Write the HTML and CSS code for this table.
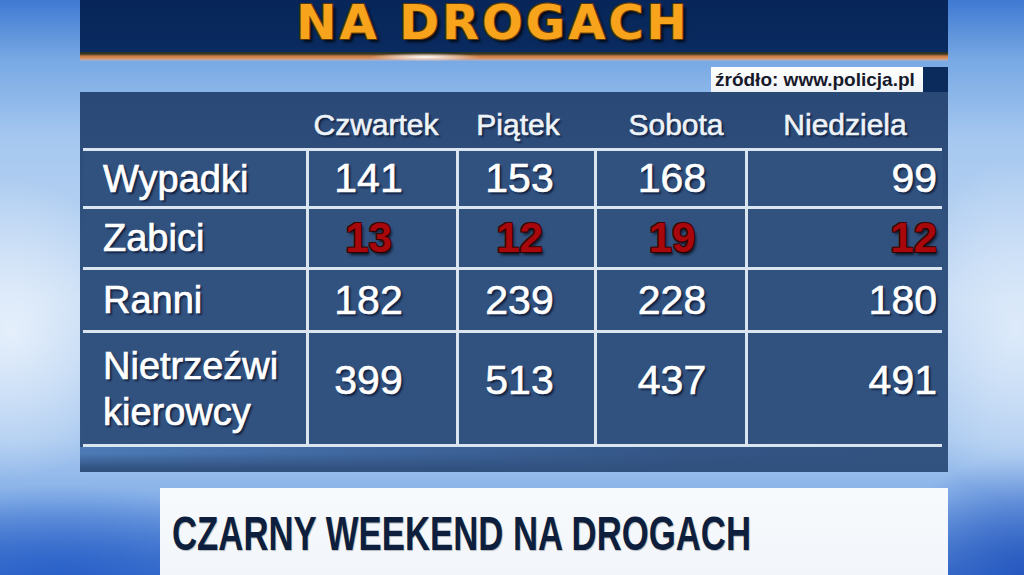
FILE: index.html
```html
<!DOCTYPE html>
<html lang="pl">
<head>
<meta charset="utf-8">
<title>Na drogach</title>
<link rel="stylesheet" href="styles.css">
</head>
<body>
<div class="screen">
  <header class="titlebar"><h1 class="title">NA DROGACH</h1></header>
  <div class="stripe"></div>
  <div class="source-row">
    <span class="source">źródło: www.policja.pl</span>
    <span class="source-tab"></span>
  </div>
  <section class="panel">
    <div class="head">
      <div></div>
      <div class="h c1">Czwartek</div>
      <div class="h c2">Piątek</div>
      <div class="h c3">Sobota</div>
      <div class="h c4">Niedziela</div>
    </div>
    <div class="grid">
      <div class="label">Wypadki</div>
      <div class="num c1">141</div>
      <div class="num c2">153</div>
      <div class="num c3">168</div>
      <div class="num c4">99</div>

      <div class="label">Zabici</div>
      <div class="num c1 red">13</div>
      <div class="num c2 red">12</div>
      <div class="num c3 red">19</div>
      <div class="num c4 red">12</div>

      <div class="label">Ranni</div>
      <div class="num c1">182</div>
      <div class="num c2">239</div>
      <div class="num c3">228</div>
      <div class="num c4">180</div>

      <div class="label">Nietrzeźwi<br>kierowcy</div>
      <div class="num c1 tall">399</div>
      <div class="num c2 tall">513</div>
      <div class="num c3 tall">437</div>
      <div class="num c4 tall">491</div>
    </div>
    <div class="panel-foot"></div>
  </section>
  <div class="banner"><span class="banner-text">CZARNY WEEKEND NA DROGACH</span></div>
</div>
</body>
</html>
```

FILE: styles.css
```css
html, body {
  margin: 0;
  padding: 0;
}
body {
  width: 1024px;
  height: 575px;
  overflow: hidden;
  font-family: "Liberation Sans", Arial, sans-serif;
  background:
    radial-gradient(ellipse 130px 150px at 10px 330px, rgba(236,244,253,0.85), rgba(236,244,253,0) 100%),
    radial-gradient(ellipse 110px 170px at 1015px 330px, rgba(228,239,252,0.8), rgba(228,239,252,0) 100%),
    radial-gradient(ellipse 260px 90px at 60px 575px, rgba(40,95,200,0.9), rgba(40,95,200,0) 100%),
    radial-gradient(ellipse 140px 120px at 1024px 575px, rgba(35,85,190,0.9), rgba(35,85,190,0) 100%),
    linear-gradient(180deg, #3f7ad2 0px, #78a9e4 60px, #a6c8f0 140px, #c3d9f3 300px, #a8c8ef 440px, #86b0e8 500px, #3f74cc 575px);
}
.screen {
  width: 868px;
  margin-left: 80px;
}
.titlebar {
  height: 52px;
  overflow: hidden;
  background: linear-gradient(180deg, #072558 0%, #0a2b60 100%);
  text-align: center;
  padding-right: 42px;
}
.title {
  margin: 0;
  font-family: "DejaVu Sans", sans-serif;
  font-weight: bold;
  font-size: 48px;
  line-height: 44px;
  letter-spacing: 3px;
  color: #f7a41c;
  text-shadow: 1px 1px 0 #5b380c, -1px -1px 0 #5b380c, 1px -1px 0 #5b380c, -1px 1px 0 #5b380c, 3px 3px 3px rgba(0,0,0,0.8);
}
.stripe {
  height: 9px;
  background:
    radial-gradient(ellipse 55px 4px at 345px 5px, rgba(255,255,255,1), rgba(255,255,255,0) 100%),
    linear-gradient(180deg, #253022 0px, #3a3a26 2px, #7d5a36 3px, #c8763c 4px, #d8905a 6px, #b7a9b6 8px, #8cb0e0 9px);
}
.source-row {
  display: flex;
  justify-content: flex-end;
  padding-top: 6px;
  height: 25px;
}
.source {
  height: 25px;
  width: 212px;
  box-sizing: border-box;
  padding-left: 4px;
  background: linear-gradient(180deg, #ffffff 0%, #eef2f6 100%);
  font-weight: bold;
  font-size: 19px;
  line-height: 26px;
  color: #17192a;
  white-space: nowrap;
}
.source-tab {
  width: 25px;
  height: 25px;
  background: #0c2b5d;
}
.panel {
  height: 380px;
  box-sizing: border-box;
  padding: 0 6px 0 3px;
  background: linear-gradient(180deg, #2b4977 0%, #31517f 40%, #32527f 100%);
  display: flex;
  flex-direction: column;
}
.head {
  height: 56px;
  display: grid;
  grid-template-columns: 223px 147px 135px 148px 194px;
  column-gap: 3px;
  align-items: end;
  padding-bottom: 6px;
  box-sizing: border-box;
}
.h {
  font-size: 30px;
  line-height: 34px;
  color: #eef3f8;
  -webkit-text-stroke: 0.6px #eef3f8;
  text-shadow: 2px 2px 2px rgba(5,15,40,0.7);
  text-align: center;
  white-space: nowrap;
}
.h.c1 { padding-right: 13px; }
.h.c2 { padding-right: 17px; }
.h.c3 { padding-left: 10px; }
.h.c4 { padding-left: 0; }
.grid {
  display: grid;
  grid-template-columns: 223px 147px 135px 148px 194px;
  grid-template-rows: 55px 58px 60px 111px;
  gap: 3px;
  background: #dbe5f0;
  border-top: 3px solid #dbe5f0;
  border-bottom: 3px solid #dbe5f0;
}
.grid > div {
  background: #31517f;
  display: flex;
  align-items: center;
  color: #ffffff;
  white-space: nowrap;
}
.label {
  padding-left: 20px;
  font-size: 38px;
  line-height: 46px;
  -webkit-text-stroke: 0.7px #ffffff;
  text-shadow: 2px 2px 2px rgba(5,15,40,0.75);
}
.num {
  font-size: 41px;
  -webkit-text-stroke: 0.6px #ffffff;
  text-shadow: 2px 2px 2px rgba(5,15,40,0.75);
}
.num.c1 { justify-content: center; padding-right: 28px; }
.num.c2 { justify-content: center; padding-right: 14px; }
.num.c3 { justify-content: center; padding-left: 2px; }
.num.c4 { justify-content: flex-end; padding-right: 5px; }
.num.tall { padding-bottom: 16px; }
.num.red {
  color: #a8080b;
  font-weight: bold;
  font-size: 42px;
  -webkit-text-stroke: 0;
  text-shadow: 1px 1px 0 #2a0000, -1px -1px 0 #3a0505, 1px -1px 0 #3a0505, -1px 1px 0 #3a0505, 2px 3px 3px rgba(0,0,0,0.7);
}
.panel-foot {
  flex: 1;
  margin: 0 -6px 0 -3px;
  background:
    linear-gradient(180deg, rgba(49,81,127,0) 0px, rgba(49,81,127,0) 6px, rgba(49,81,127,1) 22px),
    linear-gradient(90deg, rgba(95,150,220,0.6) 0%, rgba(80,130,200,0.4) 35%, rgba(60,100,170,0.15) 70%, rgba(50,80,130,0) 100%);
}
.banner {
  margin-top: 16px;
  margin-left: 80px;
  height: 87px;
  box-sizing: border-box;
  padding: 4px 0 0 12px;
  background: linear-gradient(180deg, #f7fafd 0%, #f2f6fa 100%);
  overflow: hidden;
}
.banner-text {
  display: inline-block;
  font-weight: bold;
  font-size: 49px;
  line-height: 83px;
  color: #0e1f3d;
  white-space: nowrap;
  transform: scaleX(0.709);
  transform-origin: 0 50%;
  text-shadow: 1px 1px 1px rgba(0,0,0,0.25);
}
```
